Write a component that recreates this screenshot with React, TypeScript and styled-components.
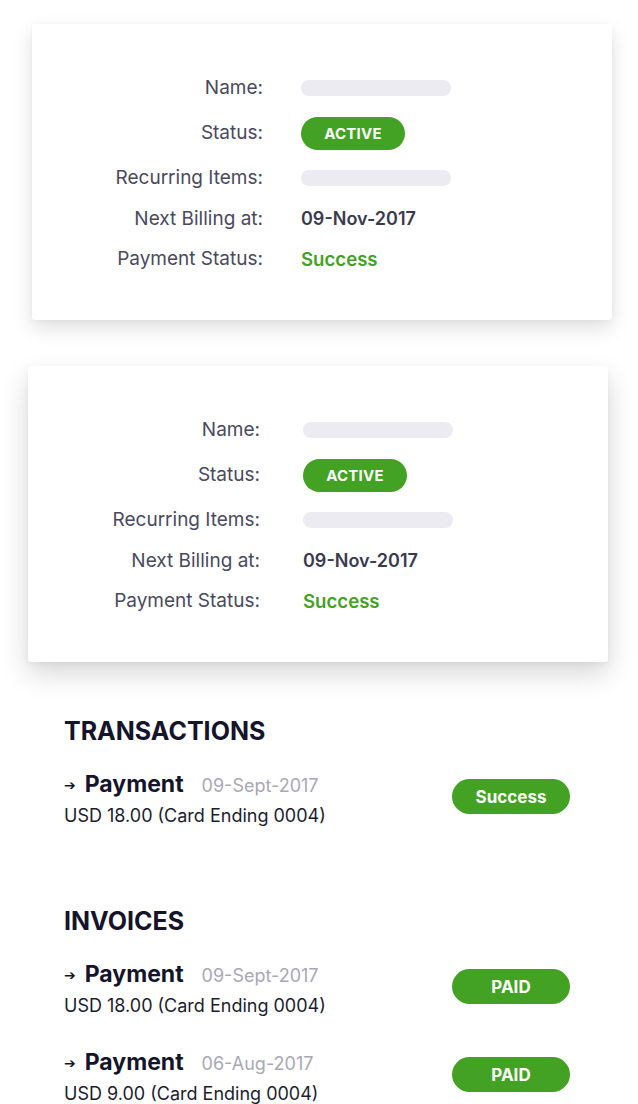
import React from "react";
import styled, { createGlobalStyle } from "styled-components";

const Global = createGlobalStyle`
  html, body { margin: 0; padding: 0; background: #ffffff; }
  body { font-family: Inter, "Noto Sans", "DejaVu Sans", sans-serif; -webkit-font-smoothing: antialiased; }
  * { box-sizing: border-box; }
`;

const GREEN = "#43a123";

const Page = styled.div`
  width: 638px;
  padding-top: 24px;
  padding-bottom: 40px;
  display: flex;
  flex-direction: column;
`;

const Card = styled.div<{ $left: number; $top: number; $deep?: boolean }>`
  width: 580px;
  height: 296px;
  margin-left: ${(p) => p.$left}px;
  margin-top: ${(p) => p.$top}px;
  background: #fff;
  border-radius: 3px;
  box-shadow: ${(p) =>
    p.$deep
      ? "0 12px 28px rgba(0,0,0,0.16), 0 2px 6px rgba(0,0,0,0.05)"
      : "0 8px 20px rgba(0,0,0,0.13), 0 1px 4px rgba(0,0,0,0.04)"};
  padding-top: 52px;
`;

const Grid = styled.div<{ $gap: number; $labelW: number }>`
  display: grid;
  grid-template-columns: ${(p) => p.$labelW}px auto;
  column-gap: ${(p) => p.$gap}px;
  row-gap: 16.5px;
  align-items: center;
  justify-items: start;
`;

const Label = styled.div`
  justify-self: end;
  font-size: 19px;
  line-height: 24px;
  color: #4a495d;
  font-weight: 400;
`;

const Skeleton = styled.div`
  width: 150px;
  height: 16px;
  border-radius: 8px;
  background: #ecebf2;
`;

const Pill = styled.div<{ $w: number; $h: number; $size: number; $upper?: boolean }>`
  width: ${(p) => p.$w}px;
  height: ${(p) => p.$h}px;
  border-radius: ${(p) => p.$h / 2}px;
  background: ${GREEN};
  color: #fff;
  display: flex;
  align-items: center;
  justify-content: center;
  font-size: ${(p) => p.$size}px;
  font-weight: 700;
  letter-spacing: ${(p) => (p.$upper ? "0.2px" : "0")};
`;

const Value = styled.div<{ $green?: boolean }>`
  font-size: ${(p) => (p.$green ? 18.6 : 18)}px;
  line-height: 24px;
  font-weight: 600;
  color: ${(p) => (p.$green ? GREEN : "#3b3a4e")};
`;

const Section = styled.section<{ $top: number }>`
  margin-top: ${(p) => p.$top}px;
  padding-left: 64px;
  width: 570px;
  display: flex;
  flex-direction: column;
`;

const Heading = styled.h2`
  margin: 0 0 25px 0;
  font-size: 25px;
  line-height: 30px;
  font-weight: 700;
  color: #14142b;
`;

const Row = styled.div<{ $gapTop?: number }>`
  display: flex;
  justify-content: space-between;
  align-items: flex-start;
  margin-top: ${(p) => p.$gapTop ?? 0}px;
`;

const Info = styled.div`
  display: flex;
  flex-direction: column;
`;

const TitleLine = styled.div`
  display: flex;
  align-items: baseline;
  height: 26px;
  line-height: 26px;
`;

const Arrow = styled.span`
  font-size: 14px;
  font-weight: 700;
  color: #14142b;
  margin-right: 9px;
  position: relative;
  top: -2px;
`;

const Title = styled.span`
  font-size: 23px;
  font-weight: 700;
  color: #14142b;
`;

const DateText = styled.span`
  margin-left: 18px;
  font-size: 18px;
  color: #a9a8b4;
`;

const Amount = styled.div`
  margin-top: 7px;
  font-size: 18px;
  line-height: 24px;
  color: #1d1c2e;
`;

const BadgeWrap = styled.div`
  margin-top: 8px;
`;

type Tx = { date: string; amount: string; badge: string };

const Entry: React.FC<{ tx: Tx; gapTop?: number }> = ({ tx, gapTop }) => (
  <Row $gapTop={gapTop}>
    <Info>
      <TitleLine>
        <Arrow>➔</Arrow>
        <Title>Payment</Title>
        <DateText>{tx.date}</DateText>
      </TitleLine>
      <Amount>{tx.amount}</Amount>
    </Info>
    <BadgeWrap>
      <Pill $w={118} $h={35} $size={17}>
        {tx.badge}
      </Pill>
    </BadgeWrap>
  </Row>
);

const Details: React.FC<{ gap: number; labelW: number }> = ({ gap, labelW }) => (
  <Grid $gap={gap} $labelW={labelW}>
    <Label>Name:</Label>
    <Skeleton />
    <Label>Status:</Label>
    <Pill $w={104} $h={33} $size={15} $upper>
      ACTIVE
    </Pill>
    <Label>Recurring Items:</Label>
    <Skeleton />
    <Label>Next Billing at:</Label>
    <Value>09-Nov-2017</Value>
    <Label>Payment Status:</Label>
    <Value $green>Success</Value>
  </Grid>
);

export default function App() {
  return (
    <>
      <Global />
      <Page>
        <Card $left={32} $top={0}>
          <Details gap={38} labelW={231} />
        </Card>
        <Card $left={28} $top={46} $deep>
          <Details gap={43} labelW={232} />
        </Card>
        <Section $top={54}>
          <Heading>TRANSACTIONS</Heading>
          <Entry tx={{ date: "09-Sept-2017", amount: "USD 18.00 (Card Ending 0004)", badge: "Success" }} />
        </Section>
        <Section $top={78}>
          <Heading>INVOICES</Heading>
          <Entry tx={{ date: "09-Sept-2017", amount: "USD 18.00 (Card Ending 0004)", badge: "PAID" }} />
          <Entry gapTop={31} tx={{ date: "06-Aug-2017", amount: "USD 9.00 (Card Ending 0004)", badge: "PAID" }} />
        </Section>
      </Page>
    </>
  );
}
